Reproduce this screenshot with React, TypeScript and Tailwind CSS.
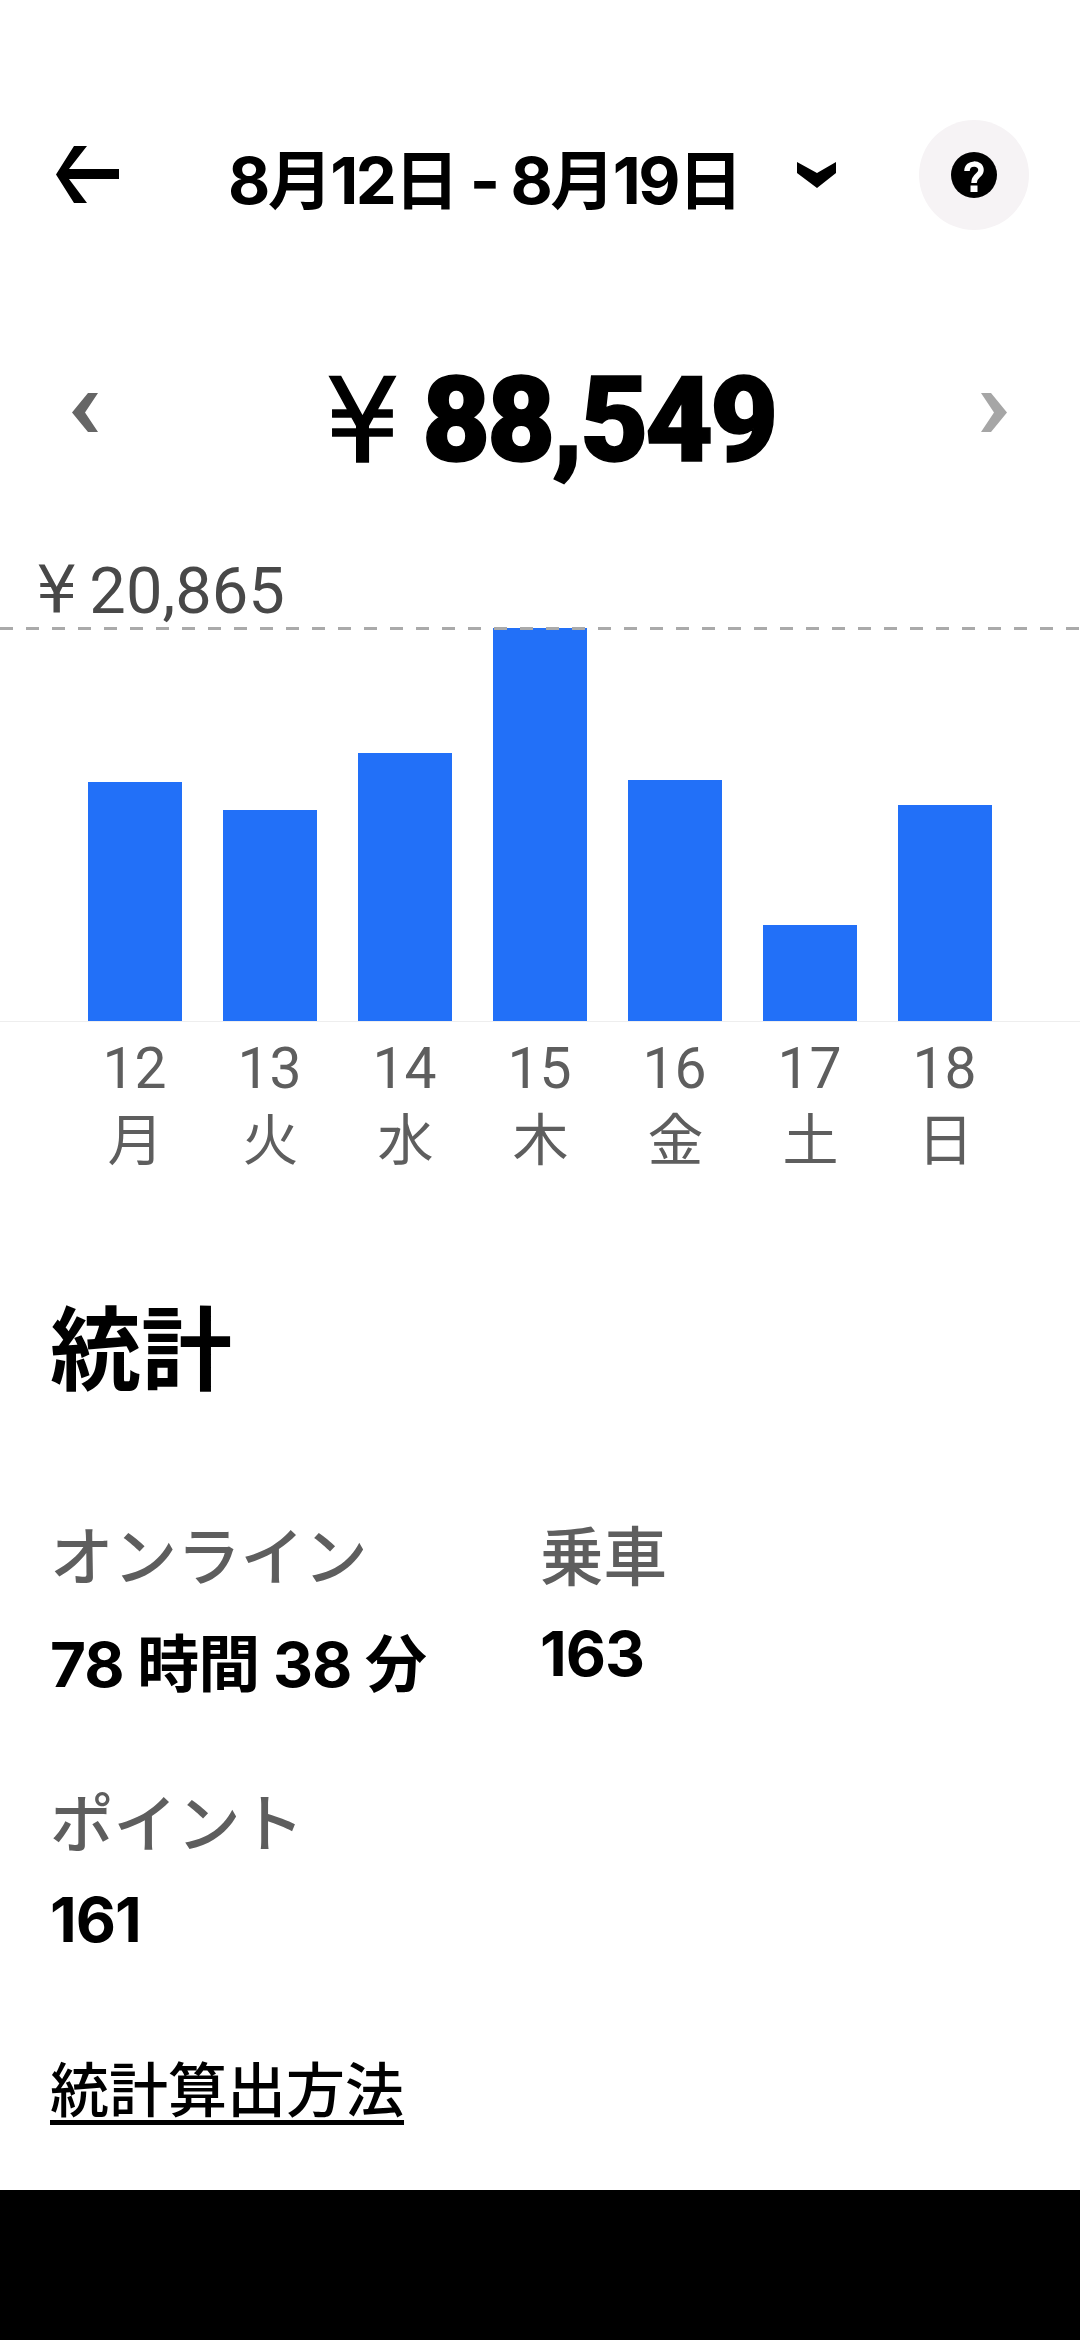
const bars = [
  { d: "12", w: "月", h: "h-[239px]" },
  { d: "13", w: "火", h: "h-[211px]" },
  { d: "14", w: "水", h: "h-[268px]" },
  { d: "15", w: "木", h: "h-[393px]" },
  { d: "16", w: "金", h: "h-[241px]" },
  { d: "17", w: "土", h: "h-[96px]" },
  { d: "18", w: "日", h: "h-[216px]" },
];
const sans = "font-['Inter','Noto_Sans_CJK_JP',sans-serif]";
const roboto = "font-['Roboto','Noto_Sans_CJK_JP',sans-serif]";
const label = "text-[63.5px] leading-[76px] font-medium text-[#5e5e5e]";
const value = "text-[62px] leading-[76px] font-bold tracking-[-1px] text-black";

export default function App() {
  return (
    <div className={`w-[1080px] h-[2340px] bg-white flex flex-col overflow-hidden ${sans}`}>
      <header className="h-[110px] mt-[120px] flex items-center pl-[55px]">
        <svg width="66" height="58" viewBox="0 0 66 58" className="shrink-0">
          <path d="M19 0 H32 L14 23 H64 V33 H14 L32 57 H19 L1 28.5 Z" fill="#000" />
        </svg>
        <div className="w-[507px] ml-[107px] pt-[12px] text-[65px] leading-[70px] font-bold tracking-[-2.5px] whitespace-nowrap text-black text-center">
          8月12日 - 8月19日
        </div>
        <svg width="39" height="26" viewBox="0 0 39 26" className="ml-[62px] shrink-0">
          <path d="M0 0 L20 11 L39 0 V11 L20 26 L0 11 Z" fill="#000" />
        </svg>
        <div className="ml-[83px] w-[110px] h-[110px] rounded-full bg-[#f6f3f5] flex items-center justify-center shrink-0">
          <svg width="46" height="46" viewBox="0 0 46 46">
            <circle cx="23" cy="23" r="23" fill="#000" />
            <path d="M16 19 C16 10 30 10 30 18 C30 24 23 23 23 31" fill="none" stroke="#fff" strokeWidth="5.5" />
            <rect x="19.5" y="33.5" width="7" height="6.5" fill="#fff" />
          </svg>
        </div>
      </header>

      <div className="mt-[127px] h-[110px] flex items-center pl-[72px] pr-[73px]">
        <svg width="26" height="39" viewBox="0 0 26 39" className="shrink-0">
          <path d="M16 0 H26 L13 19.5 L26 39 H16 L0 19.5 Z" fill="#666666" />
        </svg>
        <div className="ml-[227px] pt-[18px] text-[118px] leading-[110px] whitespace-nowrap text-black flex">
          <span className="font-normal mr-[22px] [-webkit-text-stroke:1.5px_#000] font-['DejaVu_Sans',sans-serif]">¥</span>
          <span className="font-black tracking-[-3.5px] [-webkit-text-stroke:1.5px_#000] font-['Roboto',sans-serif]">88,549</span>
        </div>
        <svg width="26" height="39" viewBox="0 0 26 39" className="shrink-0 ml-auto">
          <path d="M10 0 H0 L13 19.5 L0 39 H10 L26 19.5 Z" fill="#a6a6a6" />
        </svg>
      </div>

      <div className={`mt-[88px] pl-[36px] h-[72px] text-[65px] leading-[72px] text-[#484848] flex ${roboto}`}>
        <span className="mr-[12px] font-['DejaVu_Sans',sans-serif]">¥</span>
        <span>20,865</span>
      </div>

      <div className="relative h-[394px] pl-[88px] flex items-end gap-[41px]">
        <div className="absolute left-0 right-0 top-0 h-[3px] bg-[repeating-linear-gradient(90deg,#aaaaaa_0,#aaaaaa_13px,transparent_13px,transparent_26px)]" />
        {bars.map((b) => (
          <div key={b.d} className={`w-[94px] bg-[#2270f8] ${b.h}`} />
        ))}
      </div>
      <div className="h-[1px] bg-[#eeeeee]" />

      <div className={`pl-[67px] pt-[11px] flex text-[#5e5e5e] ${roboto}`}>
        {bars.map((b) => (
          <div key={b.d} className="w-[135px] flex flex-col items-center text-[57px] leading-[72px]">
            <span>{b.d}</span>
            <span className="text-[56px] pl-[2px]">{b.w}</span>
          </div>
        ))}
      </div>

      <section className="pl-[50px] mt-[118px]">
        <h1 className="text-[91px] leading-[110px] font-bold text-black">統計</h1>
        <div className="mt-[114px] flex">
          <div className="w-[490px]">
            <div className={label}>オンライン</div>
            <div className={`mt-[32px] ${value}`}>78 時間 38 分</div>
          </div>
          <div>
            <div className={label}>乗車</div>
            <div className={`mt-[21px] ${value}`}>163</div>
          </div>
        </div>
        <div className={`mt-[83px] ${label}`}>ポイント</div>
        <div className={`mt-[20px] ${value}`}>161</div>
        <div className="mt-[95px] text-[59px] leading-[76px] font-medium text-black underline underline-offset-[8px]">統計算出方法</div>
      </section>

      <div className="mt-auto h-[150px] bg-black shrink-0" />
    </div>
  );
}
